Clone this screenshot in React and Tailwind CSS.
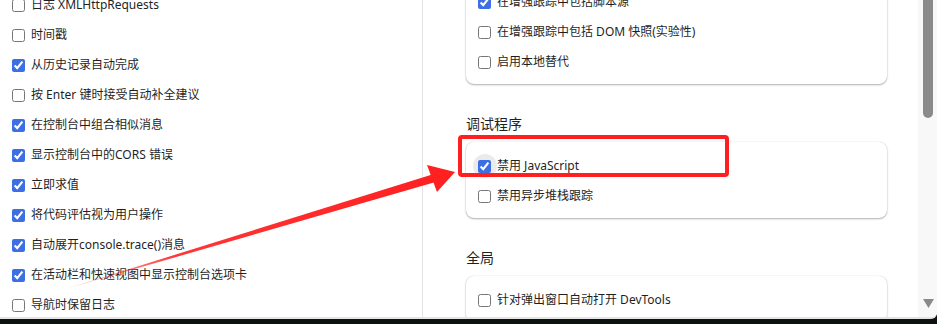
import React from 'react';

const leftItems = [
  { label: '日志 XMLHttpRequests', checked: false },
  { label: '时间戳', checked: false },
  { label: '从历史记录自动完成', checked: true },
  { label: '按 Enter 键时接受自动补全建议', checked: false },
  { label: '在控制台中组合相似消息', checked: true },
  { label: '显示控制台中的CORS 错误', checked: true },
  { label: '立即求值', checked: true },
  { label: '将代码评估视为用户操作', checked: true },
  { label: '自动展开console.trace()消息', checked: true },
  { label: '在活动栏和快速视图中显示控制台选项卡', checked: true },
  { label: '导航时保留日志', checked: false },
];

const Check = ({ label, checked, halo }) => (
  <label className="h-[30px] flex items-center gap-[6px] text-[12px] text-[#1f1f1f]">
    <span className="relative flex items-center justify-center w-[13px] h-[13px]">
      {halo && (
        <span className="absolute w-[24px] h-[24px] rounded-full bg-[#ebebeb]"></span>
      )}
      <input
        type="checkbox"
        defaultChecked={checked}
        className="relative m-0 w-[13px] h-[13px] accent-[#3c6ee4]"
      />
    </span>
    <span>{label}</span>
  </label>
);

const Card = ({ children }) => (
  <div className="w-[421px] bg-white rounded-[8px] pt-[9px] pb-[7px] pl-[12px] shadow-[0_1px_2px_rgba(0,0,0,0.3),0_0_1px_rgba(0,0,0,0.2)]">
    {children}
  </div>
);

const Heading = ({ children }) => (
  <div className="pt-[31px] pb-[9px]">
    <div className="h-[18px] leading-[18px] text-[14px] text-[#1f1f1f]">{children}</div>
  </div>
);

export default function App() {
  return (
    <div className="relative w-[937px] h-[324px] overflow-hidden bg-[#0b1210] font-['Segoe_UI','Noto_Sans','Noto_Sans_CJK_SC',sans-serif]">
      <div className="flex h-[319px] bg-white border-b-2 border-[#e4e4e4] rounded-br-[6px] overflow-hidden">
        {/* left settings column */}
        <div className="w-[423px] shrink-0 border-r border-[#e3e3e3] pl-[12px]">
          <div className="mt-[-10px]">
            {leftItems.map((it) => (
              <Check key={it.label} label={it.label} checked={it.checked} />
            ))}
          </div>
        </div>

        {/* right settings column */}
        <div className="w-[495px] shrink-0 pl-[43px]">
          <div className="mt-[-22px]">
            <Card>
              <Check label="在增强跟踪中包括脚本源" checked />
              <Check label="在增强跟踪中包括 DOM 快照(实验性)" checked={false} />
              <Check label="启用本地替代" checked={false} />
            </Card>
            <Heading>调试程序</Heading>
            <Card>
              <Check label="禁用 JavaScript" checked halo />
              <Check label="禁用异步堆栈跟踪" checked={false} />
            </Card>
            <Heading>全局</Heading>
            <Card>
              <Check label="针对弹出窗口自动打开 DevTools" checked={false} />
            </Card>
          </div>
        </div>

        {/* scrollbar */}
        <div className="flex-1 bg-[#f8f8f8] flex flex-col justify-between pl-[5px]">
          <div className="w-[10px] h-[118px] bg-[#8a8a8a] rounded-b-full"></div>
          <svg width="11" height="10" viewBox="0 0 11 10" className="mb-[9px]">
            <path d="M0 1 H11 L5.5 10 Z" fill="#8a8a8a" />
          </svg>
        </div>
      </div>

      {/* annotation: red highlight box */}
      <div className="absolute left-[458px] top-[135px] w-[271px] h-[42px] border-4 border-[#ff1f1f] rounded-[4px]"></div>

      {/* annotation: red arrow */}
      <svg className="absolute left-0 top-0 pointer-events-none" width="937" height="324">
        <defs>
          <linearGradient id="shaft" x1="62" y1="290" x2="440" y2="176" gradientUnits="userSpaceOnUse">
            <stop offset="0" stopColor="#ff2020" stopOpacity="0.1" />
            <stop offset="0.3" stopColor="#ff2020" stopOpacity="0.9" />
            <stop offset="1" stopColor="#ff2020" />
          </linearGradient>
        </defs>
        <polygon points="62,290 437,173 439,181" fill="url(#shaft)" />
        <polygon points="427,165 455,172 437,192" fill="#ff2020" />
      </svg>
    </div>
  );
}
